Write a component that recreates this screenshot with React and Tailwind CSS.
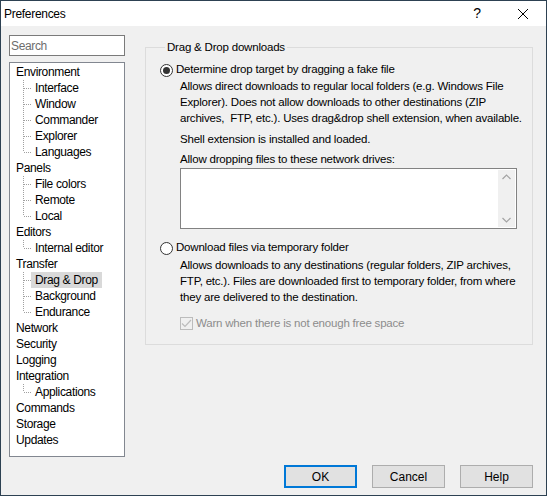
import React from "react";

const tree = [
  { label: "Environment", children: ["Interface", "Window", "Commander", "Explorer", "Languages"] },
  { label: "Panels", children: ["File colors", "Remote", "Local"] },
  { label: "Editors", children: ["Internal editor"] },
  { label: "Transfer", children: ["Drag & Drop", "Background", "Endurance"] },
  { label: "Network" },
  { label: "Security" },
  { label: "Logging" },
  { label: "Integration", children: ["Applications"] },
  { label: "Commands" },
  { label: "Storage" },
  { label: "Updates" },
];

function Connector({ last }) {
  return (
    <svg width="8" height="16" className="shrink-0" shapeRendering="crispEdges">
      <line x1="0.5" y1="0" x2="0.5" y2={last ? 8 : 16} stroke="#a0a0a0" strokeDasharray="1 1" />
      <line x1="1" y1="8.5" x2="8" y2="8.5" stroke="#a0a0a0" strokeDasharray="1 1" />
    </svg>
  );
}

function Tree() {
  return (
    <div className="h-[395px] border border-[#828790] bg-white pt-[1px]">
      {tree.map((node) => (
        <div key={node.label}>
          <div className="h-4 leading-4 pl-[6px]">{node.label}</div>
          {node.children &&
            node.children.map((c, i) => (
              <div key={c} className="flex h-4 leading-4 pl-[13px]">
                <Connector last={i === node.children.length - 1} />
                <span className={"px-1 " + (c === "Drag & Drop" ? "bg-[#d9d9d9]" : "")}>{c}</span>
              </div>
            ))}
        </div>
      ))}
    </div>
  );
}

function Radio({ checked }) {
  return (
    <span className="w-[13px] h-[13px] rounded-full border border-[#333] bg-white flex items-center justify-center shrink-0">
      {checked && <span className="w-[7px] h-[7px] rounded-full bg-[#333]" />}
    </span>
  );
}

function Button({ children, primary }) {
  return (
    <button
      className={
        "w-[73px] h-[23px] bg-[#e1e1e1] " +
        (primary ? "border-2 border-[#0078d7]" : "border border-[#adadad]")
      }
    >
      {children}
    </button>
  );
}

export default function App() {
  return (
    <div className="w-[547px] h-[496px] border border-[#2d4152] flex flex-col text-[11.5px] tracking-[-0.2px] text-black font-['Liberation_Sans',sans-serif]">
      {/* title bar */}
      <div className="h-[25px] bg-white flex items-center">
        <div className="pl-[3px] flex-1 text-[12px] tracking-[-0.3px]">Preferences</div>
        <div className="w-[46px] h-full flex items-center justify-center text-[14px]">?</div>
        <div className="w-[46px] h-full flex items-center justify-center">
          <svg width="10" height="10" viewBox="0 0 10 10">
            <path d="M0 0L10 10M10 0L0 10" stroke="#000" strokeWidth="1" />
          </svg>
        </div>
      </div>

      <div className="flex-1 bg-[#f0f0f0] flex flex-col">
        <div className="flex pl-[8px] pt-[9px]">
          <div className="w-[116px] flex flex-col gap-[6px] text-[12px] tracking-[-0.35px]">
            <div className="h-[21px] border border-[#7a7a7a] bg-white flex items-center pl-[1px] text-[#6d6d6d]">
              Search
            </div>
            <Tree />
          </div>

          <fieldset className="ml-[20px] mt-[4px] w-[388px] h-[306px] border border-[#dcdcdc] pl-[14px] self-start">
            <legend className="ml-[5px] px-[2px] leading-4">Drag &amp; Drop downloads</legend>
            <div className="flex items-center gap-[3px] h-4 mt-[7px]">
              <Radio checked />
              <span>Determine drop target by dragging a fake file</span>
            </div>
            <div className="pl-[20px] leading-4">
              <p className="whitespace-nowrap">
                Allows direct downloads to regular local folders (e.g. Windows File
                <br />
                Explorer). Does not allow downloads to other destinations (ZIP
                <br />
                archives,&nbsp; FTP, etc.). Uses drag&amp;drop shell extension, when available.
              </p>
              <p className="mt-[5px]">Shell extension is installed and loaded.</p>
              <p className="mt-1">Allow dropping files to these network drives:</p>
              <div className="mt-[1px] w-[337px] h-[61px] border border-[#828282] bg-white flex justify-end p-[1px]">
                <div className="w-[17px] bg-[#f0f0f0] flex flex-col justify-between items-center py-[4px]">
                  <svg width="9" height="6" viewBox="0 0 9 6">
                    <path d="M0.5 5L4.5 1L8.5 5" fill="none" stroke="#a3a3a3" strokeWidth="1.2" />
                  </svg>
                  <svg width="9" height="6" viewBox="0 0 9 6">
                    <path d="M0.5 1L4.5 5L8.5 1" fill="none" stroke="#a3a3a3" strokeWidth="1.2" />
                  </svg>
                </div>
              </div>
            </div>
            <div className="flex items-center gap-[3px] h-4 mt-[11px]">
              <Radio />
              <span>Download files via temporary folder</span>
            </div>
            <div className="pl-[20px] leading-4 mt-[1px]">
              <p className="whitespace-nowrap">
                Allows downloads to any destinations (regular folders, ZIP archives,
                <br />
                FTP, etc.). Files are downloaded first to temporary folder, from where
                <br />
                they are delivered to the destination.
              </p>
              <div className="flex items-center gap-[3px] h-4 mt-[10px]">
                <span className="w-[13px] h-[13px] border border-[#bcbcbc] bg-[#f0f0f0] flex items-center justify-center">
                  <svg width="11" height="9" viewBox="0 0 11 9">
                    <path d="M1 4.5L4 7.5L10 1" fill="none" stroke="#bcbcbc" strokeWidth="1.2" />
                  </svg>
                </span>
                <span className="text-[#8c8c8c]">Warn when there is not enough free space</span>
              </div>
            </div>
          </fieldset>
        </div>

        <div className="mt-auto flex justify-end gap-[15px] pr-[13px] pb-[7px] text-[12px] tracking-normal">
          <Button primary>OK</Button>
          <Button>Cancel</Button>
          <Button>Help</Button>
        </div>
      </div>
    </div>
  );
}
